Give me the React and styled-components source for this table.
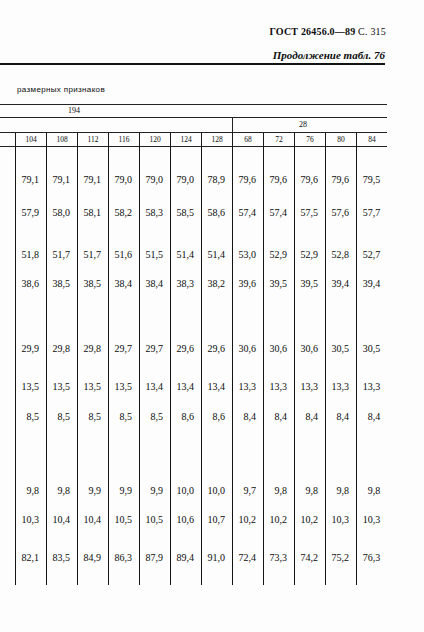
import React from "react";
import styled, { createGlobalStyle } from "styled-components";

const GlobalStyle = createGlobalStyle`
  html, body {
    margin: 0;
    padding: 0;
    background: #fcfdfc;
  }
  body {
    font-family: "Liberation Serif", "Times New Roman", serif;
    color: #0c0c0c;
  }
`;

const heads = ["104", "108", "112", "116", "120", "124", "128", "68", "72", "76", "80", "84"];

// gap = space above the text line, in px
const rows = [
  { gap: 27, values: ["79,1", "79,1", "79,1", "79,0", "79,0", "79,0", "78,9", "79,6", "79,6", "79,6", "79,6", "79,5"] },
  { gap: 21, values: ["57,9", "58,0", "58,1", "58,2", "58,3", "58,5", "58,6", "57,4", "57,4", "57,5", "57,6", "57,7"] },
  { gap: 30, values: ["51,8", "51,7", "51,7", "51,6", "51,5", "51,4", "51,4", "53,0", "52,9", "52,9", "52,8", "52,7"] },
  { gap: 17, values: ["38,6", "38,5", "38,5", "38,4", "38,4", "38,3", "38,2", "39,6", "39,5", "39,5", "39,4", "39,4"] },
  { gap: 53, values: ["29,9", "29,8", "29,8", "29,7", "29,7", "29,6", "29,6", "30,6", "30,6", "30,6", "30,5", "30,5"] },
  { gap: 26, values: ["13,5", "13,5", "13,5", "13,5", "13,4", "13,4", "13,4", "13,3", "13,3", "13,3", "13,3", "13,3"] },
  { gap: 18, values: ["8,5", "8,5", "8,5", "8,5", "8,5", "8,6", "8,6", "8,4", "8,4", "8,4", "8,4", "8,4"] },
  { gap: 62, values: ["9,8", "9,8", "9,9", "9,9", "9,9", "10,0", "10,0", "9,7", "9,8", "9,8", "9,8", "9,8"] },
  { gap: 17, values: ["10,3", "10,4", "10,4", "10,5", "10,5", "10,6", "10,7", "10,2", "10,2", "10,2", "10,3", "10,3"] },
  { gap: 26, values: ["82,1", "83,5", "84,9", "86,3", "87,9", "89,4", "91,0", "72,4", "73,3", "74,2", "75,2", "76,3"], last: true },
];

const Page = styled.div`
  width: 424px;
  height: 632px;
  padding-top: 26px;
  box-sizing: border-box;
  overflow: hidden;
`;

const RunningHead = styled.div`
  padding-right: 38px;
  text-align: right;
  font-size: 10px;
  line-height: 12px;
  letter-spacing: 0.2px;

  b {
    font-weight: bold;
  }
`;

const Caption = styled.div`
  margin-top: 11px;
  padding-right: 39px;
  text-align: right;
  font-size: 11px;
  line-height: 12px;
  font-style: italic;
  font-weight: bold;
`;

const Rule = styled.div`
  width: 385px;
  margin-top: 2px;
  border-top: 2px solid #141414;
`;

const Subtitle = styled.div`
  margin-top: 20px;
  padding-left: 17px;
  font-family: "Liberation Sans", Arial, sans-serif;
  font-size: 8px;
  line-height: 10px;
  letter-spacing: 0.35px;
`;

const Table = styled.table`
  margin-top: 9px;
  width: 387px;
  table-layout: fixed;
  border-collapse: separate;
  border-spacing: 0;
  font-family: "Liberation Serif", "Times New Roman", serif;
  color: #0c0c0c;
`;

const GroupCell = styled.td`
  padding: 0 0 0 ${(p) => p.$indent}px;
  height: ${(p) => p.$h}px;
  line-height: ${(p) => p.$h}px;
  font-size: 8px;
  border-top: 1px solid #222;
  border-left: ${(p) => (p.$divider ? "1px solid #222" : "none")};
  vertical-align: middle;
`;

const HeadCell = styled.td`
  padding: 0;
  height: 13px;
  line-height: 13px;
  font-size: 7.5px;
  text-align: center;
  border-top: 1px solid #222;
  border-bottom: 1px solid #222;
  border-left: ${(p) => (p.$spacer ? "none" : "1px solid #1a1a1a")};
`;

const Cell = styled.td`
  padding: ${(p) => p.$gap}px 7px ${(p) => (p.$last ? 21 : 0)}px 0;
  line-height: 12px;
  font-size: 10px;
  text-align: right;
  vertical-align: top;
  white-space: nowrap;
  border-left: ${(p) => (p.$spacer ? "none" : "1px solid #141414")};
`;

const App = () => {
  return (
    <>
      <GlobalStyle />
      <Page>
        <RunningHead>
          <b>ГОСТ 26456.0—89</b> С. 315
        </RunningHead>
        <Caption>Продолжение табл. 76</Caption>
        <Rule />
        <Subtitle>размерных признаков</Subtitle>

        <Table>
          <colgroup>
            <col style={{ width: 15 }} />
            {heads.map((h, i) => (
              <col key={h + i} style={{ width: 31 }} />
            ))}
          </colgroup>
          <tbody>
            <tr>
              <GroupCell colSpan={13} $h={12} $indent={68}>
                194
              </GroupCell>
            </tr>
            <tr>
              <GroupCell colSpan={8} $h={14} $indent={0} />
              <GroupCell colSpan={5} $h={14} $indent={66} $divider>
                28
              </GroupCell>
            </tr>
            <tr>
              <HeadCell $spacer />
              {heads.map((h, i) => (
                <HeadCell key={h + i}>{h}</HeadCell>
              ))}
            </tr>
            {rows.map((row, r) => (
              <tr key={r}>
                <Cell $spacer $gap={row.gap} $last={row.last} />
                {row.values.map((v, i) => (
                  <Cell key={i} $gap={row.gap} $last={row.last}>
                    {v}
                  </Cell>
                ))}
              </tr>
            ))}
          </tbody>
        </Table>
      </Page>
    </>
  );
};

export default App;
